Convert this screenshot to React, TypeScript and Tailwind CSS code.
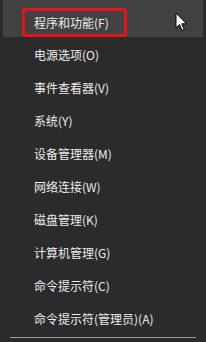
const items = [
  '电源选项(O)',
  '事件查看器(V)',
  '系统(Y)',
  '设备管理器(M)',
  '网络连接(W)',
  '磁盘管理(K)',
  '计算机管理(G)',
  '命令提示符(C)',
  '命令提示符(管理员)(A)',
]

function Cursor() {
  return (
    <svg className="absolute left-[175px] top-[12px]" width="13" height="20" viewBox="0 0 13 20">
      <path
        d="M1 1 L1 16 L4.5 12.5 L7 18.5 L9.2 17.6 L6.8 11.8 L11.5 11.8 Z"
        fill="#fff"
        stroke="#000"
        strokeWidth="1"
        strokeLinejoin="round"
      />
    </svg>
  )
}

export default function App() {
  return (
    <div className="relative h-[342px] w-[206px] overflow-hidden bg-[#2b2b2b] font-['Noto_Sans_CJK_SC',sans-serif] text-[12px] text-[#ececec]">
      <div className="mx-[3px] flex h-[37px] items-center bg-[#414141] pl-[19px] pt-[8px]">
        <div className="flex h-[29px] w-[105px] items-center rounded-[3px] border-[3px] border-[#e5121b] pl-[9px]">
          程序和功能(F)
        </div>
      </div>
      <div className="mt-[1px] flex flex-col">
        {items.map((label) => (
          <div key={label} className="flex h-[33px] items-center pl-[34px]">
            {label}
          </div>
        ))}
      </div>
      <div className="mx-[10px] mt-[2px] h-px bg-[#9a9a9a]" />
      <Cursor />
    </div>
  )
}
